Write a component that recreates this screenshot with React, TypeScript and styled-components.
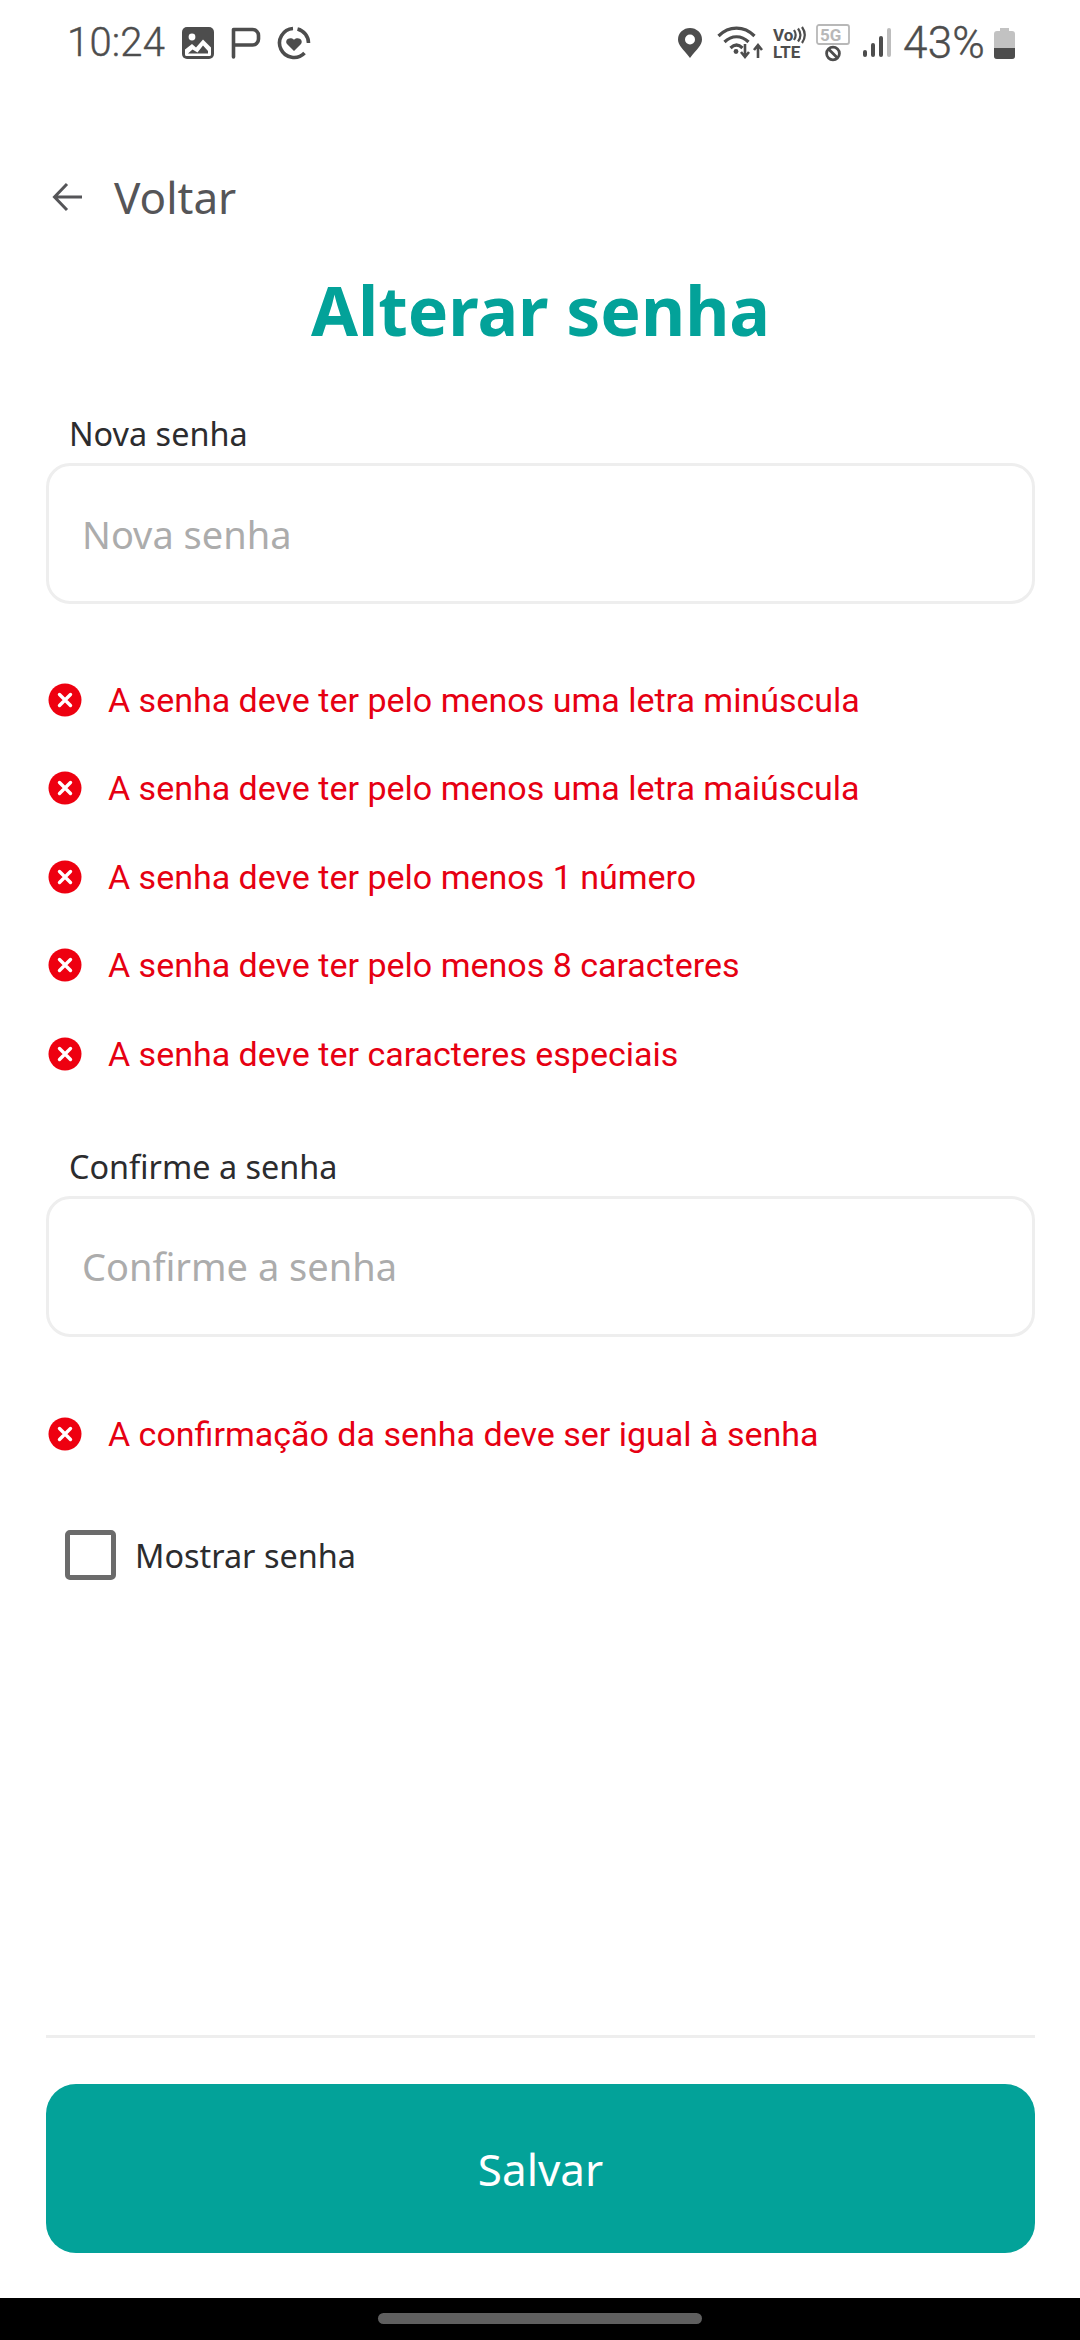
import React from "react";
import styled, { createGlobalStyle } from "styled-components";

const GlobalStyle = createGlobalStyle`
  html, body { margin: 0; padding: 0; background: #fff; }
  * { box-sizing: border-box; }
`;

const brandFont = `"Noto Sans", "Open Sans", sans-serif`;

const Screen = styled.div`
  width: 1080px;
  height: 2340px;
  display: flex;
  flex-direction: column;
  background: #fff;
  overflow: hidden;
  font-family: ${brandFont};
`;

const StatusBar = styled.div`
  height: 86px;
  flex: none;
  padding: 22px 65px 0 67px;
  display: flex;
  align-items: flex-start;
  justify-content: space-between;
  color: #4d4d4d;
`;

const StatusGroup = styled.div`
  display: flex;
  align-items: center;
  height: 42px;
`;

const StatusText = styled.span<{ $size?: number; $left?: number }>`
  font-family: Roboto, sans-serif;
  font-size: ${(p) => p.$size ?? 40}px;
  font-weight: 300;
  line-height: 42px;
  letter-spacing: 0.2px;
  margin-left: ${(p) => p.$left ?? 0}px;
  -webkit-text-stroke: 0.4px #4d4d4d;
`;

const Body = styled.main`
  flex: 1;
  display: flex;
  flex-direction: column;
  padding: 0 45px 0 46px;
`;

const BackRow = styled.div`
  display: flex;
  align-items: center;
  gap: 30px;
  margin-top: 85px;
  padding-left: 6px;
  height: 52px;
  color: #555558;
  font-size: 44px;
  line-height: 52px;
`;

const Title = styled.h1`
  margin: 43px 0 0;
  text-align: center;
  font-size: 68px;
  line-height: 88px;
  font-weight: 700;
  color: #03a299;
`;

const FieldLabel = styled.label<{ $top: number }>`
  display: block;
  margin: ${(p) => p.$top}px 0 0 23px;
  font-size: 32.4px;
  line-height: 44px;
  color: #2c2c2e;
`;

const InputBox = styled.div`
  height: 141px;
  margin-top: 8px;
  display: flex;
  align-items: center;
  padding-left: 33px;
  border: 3px solid #eeeeee;
  border-radius: 24px;
  color: #acacac;
  font-size: 38px;
`;

const ErrorList = styled.ul<{ $top: number }>`
  list-style: none;
  margin: ${(p) => p.$top}px 0 0;
  padding: 0;
  display: flex;
  flex-direction: column;
  gap: 44.4px;
`;

const ErrorItem = styled.li`
  display: flex;
  align-items: center;
  gap: 26px;
  height: 44px;
  padding-left: 2px;
  font-family: Roboto, sans-serif;
  font-size: 34px;
  line-height: 44px;
  color: #e60012;
`;

const CheckRow = styled.div`
  display: flex;
  align-items: center;
  gap: 19px;
  margin-top: 74px;
  padding-left: 19px;
  font-size: 32.4px;
  line-height: 50px;
  color: #2c2c2e;
`;

const CheckBox = styled.span`
  width: 51px;
  height: 50px;
  flex: none;
  border: 5px solid #6b6b6b;
  border-radius: 5px;
`;

const Footer = styled.footer`
  flex: none;
  margin: 0 45px 0 46px;
  padding: 46px 0 45px;
  border-top: 3px solid #eeeeee;
`;

const SaveButton = styled.button`
  display: block;
  width: 100%;
  height: 169px;
  border: 0;
  border-radius: 30px;
  background: #03a299;
  color: #fff;
  font-family: ${brandFont};
  font-size: 44px;
`;

const NavBar = styled.div`
  flex: none;
  height: 42px;
  padding-top: 15px;
  background: #000;
  display: flex;
  justify-content: center;
`;

const NavPill = styled.span`
  width: 324px;
  height: 11px;
  border-radius: 6px;
  background: #5f5f5f;
`;

const IconSlot = styled.svg<{ $left?: number }>`
  flex: none;
  display: block;
  margin-left: ${(p) => p.$left ?? 0}px;
`;

const SmallText = styled.text`
  font-family: Roboto, sans-serif;
  font-weight: 700;
`;

const ErrorIcon = () => (
  <svg width="34" height="34" viewBox="0 0 34 34">
    <circle cx="17" cy="17" r="16.500" fill="#ee0010" />
    <path d="M11.500 11.500l11 11M22.500 11.500l-11 11" stroke="#fff" strokeWidth="3.400" strokeLinecap="round" />
  </svg>
);

const errors = [
  "A senha deve ter pelo menos uma letra minúscula",
  "A senha deve ter pelo menos uma letra maiúscula",
  "A senha deve ter pelo menos 1 número",
  "A senha deve ter pelo menos 8 caracteres",
  "A senha deve ter caracteres especiais",
];

export default function App() {
  return (
    <Screen>
      <GlobalStyle />
      <StatusBar>
        <StatusGroup>
          <StatusText>10:24</StatusText>
          {/* galeria */}
          <IconSlot $left={17} width="32" height="32" viewBox="0 0 32 32">
            <rect width="32" height="32" rx="5" fill="#4d4d4d" />
            <circle cx="10" cy="10" r="3.400" fill="#fff" />
            <path d="M3 27.500v-5l7-5.500 4 3.500 7-8 8 8v7a1.500 1.500 0 0 1-1.500 1.500h-23a1.500 1.500 0 0 1-1.500-1.500z" fill="#fff" />
            <path d="M6 26.500l4.500-4 5 3 5.500-7 5 5.500v2.500z" fill="#4d4d4d" />
          </IconSlot>
          {/* P */}
          <IconSlot $left={17} width="30" height="32" viewBox="0 0 30 32">
            <path d="M2.500 30V2.500h19a6 6 0 0 1 6 6v3.500a6 6 0 0 1-6 6H2.500" fill="none" stroke="#4d4d4d" strokeWidth="3.600" strokeLinecap="round" strokeLinejoin="round" />
          </IconSlot>
          {/* coracao */}
          <IconSlot $left={16} width="34" height="34" viewBox="0 0 34 34">
            <path d="M16 2.500A14.500 14.500 0 1 0 27.500 27" fill="none" stroke="#4d4d4d" strokeWidth="3.600" />
            <path d="M20.500 2.900A14.500 14.500 0 0 1 31.500 17" fill="none" stroke="#4d4d4d" strokeWidth="3.600" />
            <path d="M17 25l-7-7c-2.800-3.600 2.500-8 7-4.200 4.500-3.800 9.800.6 7 4.200z" fill="#4d4d4d" />
          </IconSlot>
        </StatusGroup>
        <StatusGroup>
          {/* localizacao */}
          <IconSlot width="24" height="30" viewBox="0 0 24 30">
            <path d="M12 30C5 21 0 17 0 11.500a12 11.500 0 0 1 24 0C24 17 19 21 12 30z" fill="#4d4d4d" />
            <circle cx="12" cy="11.500" r="5" fill="#fff" />
          </IconSlot>
          {/* wifi */}
          <IconSlot $left={15} width="46" height="34" viewBox="0 0 46 34">
            <path d="M1.500 10C12-.5 27-.5 37.500 10M7.500 16c7-7 17-7 24 0M13.500 22c4-4 8-4 12 0" fill="none" stroke="#4d4d4d" strokeWidth="3.200" />
            <circle cx="19" cy="25.500" r="2.400" fill="#4d4d4d" />
            <path d="M28 18v12M24 26l4 5 4-5M41 32V20M37 24l4-5 4 5" fill="none" stroke="#4d4d4d" strokeWidth="2.600" />
          </IconSlot>
          {/* volte */}
          <IconSlot $left={9} width="36" height="40" viewBox="0 0 36 40">
            <SmallText x="1" y="18" fontSize="17" fill="#4d4d4d">Vo</SmallText>
            <path d="M22 7c2 3 2 7 0 10M26 5.500c3 4 3 9 0 13M30 4c3.500 5 3.500 11 0 16" fill="none" stroke="#4d4d4d" strokeWidth="2.200" />
            <SmallText x="1" y="35" fontSize="17" fill="#4d4d4d">LTE</SmallText>
          </IconSlot>
          {/* 5G sem sinal */}
          <IconSlot $left={8} width="34" height="38" viewBox="0 0 34 38">
            <rect x="1" y="1" width="32" height="19" rx="2" fill="none" stroke="#b8b8b8" strokeWidth="1.800" />
            <SmallText x="4" y="17" fontSize="17" fill="#b8b8b8">5G</SmallText>
            <circle cx="17" cy="29.500" r="6.400" fill="none" stroke="#4d4d4d" strokeWidth="2.800" />
            <path d="M12.500 25l9 9" stroke="#4d4d4d" strokeWidth="2.800" />
          </IconSlot>
          {/* sinal */}
          <IconSlot $left={13} width="28" height="30" viewBox="0 0 28 30">
            <rect x="0" y="22" width="4" height="7" rx="2" fill="#4d4d4d" />
            <rect x="8" y="15" width="4" height="14" rx="2" fill="#4d4d4d" />
            <rect x="16" y="8" width="4" height="21" rx="2" fill="#4d4d4d" />
            <rect x="24" y="0" width="4" height="29" rx="2" fill="#bdbdbd" />
          </IconSlot>
          <StatusText $size={44} $left={12}>43%</StatusText>
          {/* bateria */}
          <IconSlot $left={9} width="21" height="31" viewBox="0 0 21 31">
            <path d="M6 0h9v3h3a3 3 0 0 1 3 3v22a3 3 0 0 1-3 3H3a3 3 0 0 1-3-3V6a3 3 0 0 1 3-3h3z" fill="#c2c2c2" />
            <path d="M0 20h21v8a3 3 0 0 1-3 3H3a3 3 0 0 1-3-3z" fill="#4d4d4d" />
          </IconSlot>
        </StatusGroup>
      </StatusBar>

      <Body>
        <BackRow>
          <svg width="32" height="32" viewBox="0 0 32 32">
            <path d="M30 16H3M15 3L2.500 16 15 29" fill="none" stroke="#555558" strokeWidth="3" />
          </svg>
          Voltar
        </BackRow>
        <Title>Alterar senha</Title>

        <FieldLabel $top={57}>Nova senha</FieldLabel>
        <InputBox>Nova senha</InputBox>
        <ErrorList $top={74}>
          {errors.map((text) => (
            <ErrorItem key={text}>
              <ErrorIcon />
              {text}
            </ErrorItem>
          ))}
        </ErrorList>

        <FieldLabel $top={68}>Confirme a senha</FieldLabel>
        <InputBox>Confirme a senha</InputBox>
        <ErrorList $top={75}>
          <ErrorItem>
            <ErrorIcon />A confirmação da senha deve ser igual à senha
          </ErrorItem>
        </ErrorList>

        <CheckRow>
          <CheckBox />
          Mostrar senha
        </CheckRow>
      </Body>

      <Footer>
        <SaveButton>Salvar</SaveButton>
      </Footer>
      <NavBar>
        <NavPill />
      </NavBar>
    </Screen>
  );
}
